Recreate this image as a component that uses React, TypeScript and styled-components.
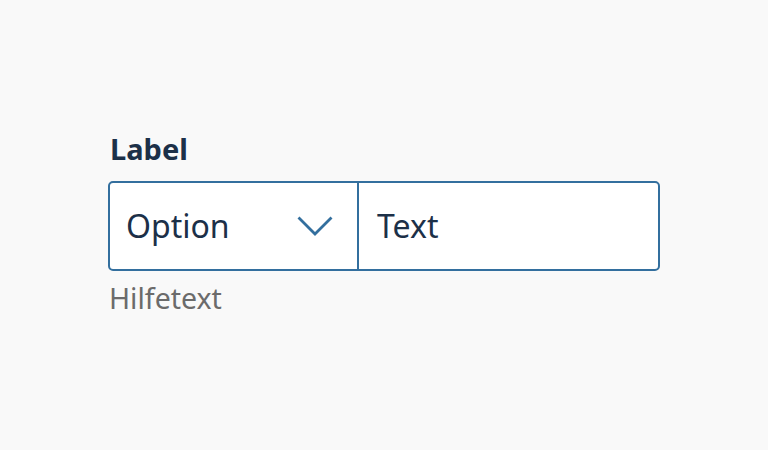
import * as React from "react";
import styled, { createGlobalStyle } from "styled-components";

const GlobalStyle = createGlobalStyle`
  html, body {
    margin: 0;
    padding: 0;
    background: #f9f9f9;
  }
  body {
    font-family: "Noto Sans", "Liberation Sans", sans-serif;
    color: #1c3048;
  }
`;

const SPage = styled.div`
  width: 768px;
  height: 450px;
  box-sizing: border-box;
  padding-top: 131px;
  display: flex;
  justify-content: center;
`;

const SField = styled.div`
  width: 552px;
  display: flex;
  flex-direction: column;
`;

const SLabel = styled.label`
  font-size: 29px;
  font-weight: 700;
  line-height: 36px;
  margin-bottom: 14px;
  padding-left: 2px;
`;

const SGroup = styled.div`
  display: flex;
  height: 90px;
  box-sizing: border-box;
  border: 2px solid #336f9e;
  border-radius: 5px;
  background: #fff;
  overflow: hidden;
`;

const SSelect = styled.div`
  width: 249px;
  box-sizing: border-box;
  display: flex;
  align-items: center;
  justify-content: space-between;
  padding: 0 24px 0 16px;
  border-right: 2px solid #336f9e;
`;

const SValue = styled.span`
  font-size: 32px;
  line-height: 40px;
`;

const SInput = styled.div`
  flex: 1;
  display: flex;
  align-items: center;
  padding: 0 18px;
`;

const SHint = styled.div`
  font-size: 28.5px;
  line-height: 34px;
  color: #6b6b6b;
  margin-top: 10px;
  padding-left: 1px;
`;

const Chevron: React.FC = () => (
  <svg width="36" height="20" viewBox="0 0 36 20" fill="none">
    <path d="M1.5 1.5 L18 18 L34.5 1.5" stroke="#336f9e" strokeWidth="2.8" />
  </svg>
);

export default function App() {
  return (
    <SPage>
      <GlobalStyle />
      <SField>
        <SLabel>Label</SLabel>
        <SGroup>
          <SSelect>
            <SValue>Option</SValue>
            <Chevron />
          </SSelect>
          <SInput>
            <SValue>Text</SValue>
          </SInput>
        </SGroup>
        <SHint>Hilfetext</SHint>
      </SField>
    </SPage>
  );
}
